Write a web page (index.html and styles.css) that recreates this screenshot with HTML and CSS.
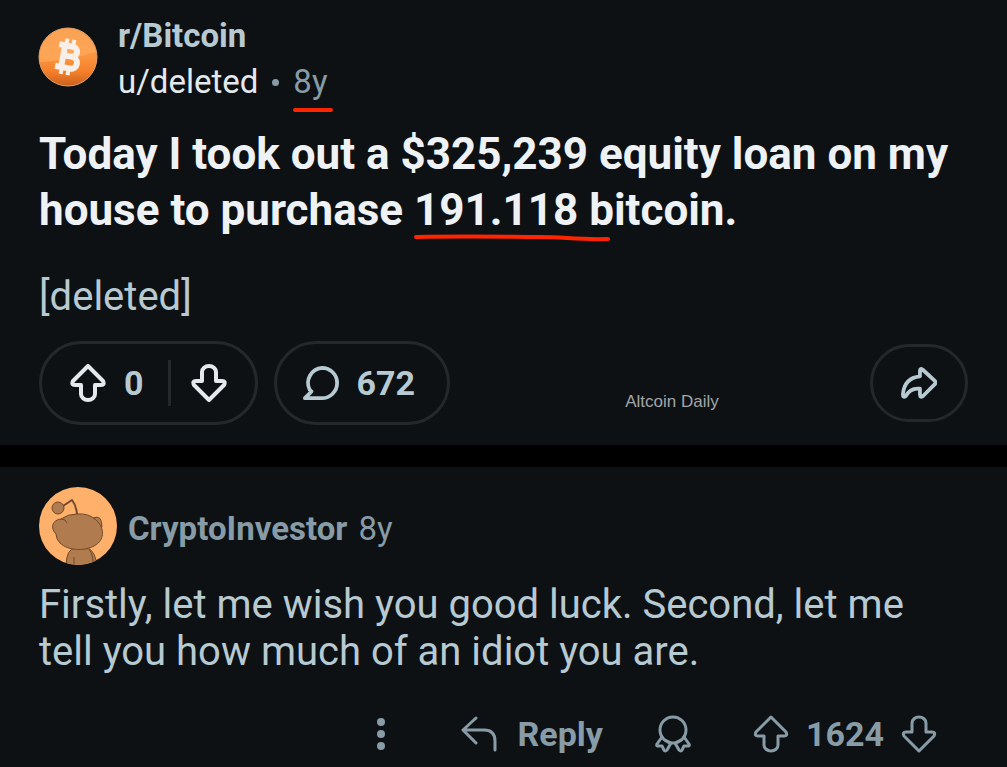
FILE: index.html
```
<!DOCTYPE html>
<html lang="en">
<head>
<meta charset="UTF-8">
<title>r/Bitcoin</title>
<link rel="stylesheet" href="styles.css">
</head>
<body>
<svg class="defs" aria-hidden="true">
  <symbol id="arrow" viewBox="0 0 36 38">
    <path d="M18 2 33 17Q35 21 31 21H25V30A7 6 0 0 1 11 30V21H5Q1 21 3 17Z"/>
  </symbol>
</svg>

<main>
<article class="post">
<header class="post-head">
  <svg class="coin" viewBox="0 0 60 60" role="img" aria-label="Bitcoin">
    <defs>
      <linearGradient id="coin-fill" x1="0" y1="0" x2="0" y2="1">
        <stop offset="0" stop-color="#f58f3c"/>
        <stop offset=".5" stop-color="#fc9440"/>
        <stop offset=".75" stop-color="#f5802a"/>
        <stop offset="1" stop-color="#c9601c"/>
      </linearGradient>
    </defs>
    <circle cx="30" cy="30" r="29" fill="url(#coin-fill)" stroke="#e3a06a" stroke-width="1"/>
    <path d="M2 35Q31 34 58 25A28 28 0 0 0 2 35Z" fill="#ffb56c" opacity=".5"/>
    <g transform="rotate(11 30 30)" fill="none" stroke="#f8f0e8" stroke-width="5" stroke-linejoin="round">
      <path d="M19 19H33A5 5 0 0 1 33 29H25M33 29H34A6 6 0 0 1 34 41H19M25 19V41" stroke-width="6"/>
      <path d="M26 12V19M33 12V19M26 41V48M33 41V48" stroke-width="4"/>
    </g>
  </svg>
  <div class="post-by">
    <a class="sub" href="#">r/Bitcoin</a>
    <div class="byline">
      <a class="user" href="#">u/deleted</a><span class="dot"></span><span class="age marked">8y<svg class="mark mark-age" viewBox="0 0 40 6"><path d="M2 3H38"/></svg></span>
    </div>
  </div>
</header>
<h1 class="title">Today I took out a $325,239 equity loan on my house to purchase <span class="marked">191.118<svg class="mark mark-amount" viewBox="0 0 196 8"><path d="M2 3C60 2 100 3 125 3S165 6 194 5"/></svg></span> bitcoin.</h1>
<p class="text">[deleted]</p>
<div class="bar">
  <div class="pill votes">
    <button class="up" aria-label="Upvote"><svg class="icon"><use href="#arrow"/></svg><span>0</span></button>
    <button class="down" aria-label="Downvote"><svg class="icon flip"><use href="#arrow"/></svg></button>
  </div>
  <button class="pill comments">
    <svg class="icon" viewBox="0 0 38 38"><path d="M20 3A16 16 0 1 1 20 35H2L9 28 7 26A16 16 0 0 1 20 3Z"/></svg>672
  </button>
  <span class="credit">Altcoin Daily</span>
  <button class="pill share" aria-label="Share">
    <svg class="icon" viewBox="0 0 38 34"><path d="M20 4Q20 1 23 3L36 15Q37 17 36 18L23 31Q20 33 20 29V23C12 22 8 25 5 31Q2 33 2 29C3 18 9 11 20 10Z"/></svg>
  </button>
</div>
</article>

<article class="comment">
<header class="comment-head">
  <svg class="avatar" viewBox="0 0 78 78" role="img" aria-label="CryptoInvestor">
    <defs><clipPath id="round"><circle cx="39" cy="39" r="39"/></clipPath></defs>
    <g clip-path="url(#round)">
      <rect width="78" height="78" fill="#ffb06a"/>
      <g fill="#b07c4f" stroke="#71492c" stroke-width="1">
        <path d="M27 80Q27 61 37 61H49Q57 65 58 80Z"/>
        <path d="M35 80V70M50 62Q55 69 54 80" fill="none"/>
        <path d="M54 31Q63 27 63 40L60 43Z"/>
        <path d="M22 32Q29 27 38 27Q50 26 57 33C66 41 65 52 58 57C48 65 29 64 21 56Q17 52 17 47C11 41 13 33 22 32Z"/>
        <path d="M22 32Q27 32 28 36" fill="none"/>
        <path d="M38 27Q37 18 33 13L24 19" fill="none" stroke-width="2"/>
        <circle cx="19" cy="21" r="6"/>
      </g>
    </g>
  </svg>
  <a class="author" href="#">CryptoInvestor</a>
  <span class="age">8y</span>
</header>
<p class="text">Firstly, let me wish you good luck. Second, let me tell you how much of an idiot you are.</p>
<div class="actions">
  <button class="more" aria-label="More"><svg class="dots" viewBox="0 0 8 32"><circle cx="4" cy="4" r="4"/><circle cx="4" cy="16" r="4"/><circle cx="4" cy="28" r="4"/></svg></button>
  <button class="reply"><svg class="icon" viewBox="0 0 36 38"><path d="M15 3 2 15 15 28M2 15H23Q34 15 34 26V35"/></svg>Reply</button>
  <button class="award" aria-label="Award"><svg class="icon" viewBox="0 0 36 38"><circle cx="18" cy="15" r="13"/><path d="M7 22 2 29Q1 31 3 31L7 31 9 35Q10 37 12 35L16 28 10 25M29 22 34 29Q35 31 33 31L29 31 27 35Q26 37 24 35L20 28 26 25"/></svg></button>
  <div class="score">
    <button aria-label="Upvote"><svg class="icon"><use href="#arrow"/></svg></button>
    <span>1624</span>
    <button aria-label="Downvote"><svg class="icon flip"><use href="#arrow"/></svg></button>
  </div>
</div>
</article>
</main>
</body>
</html>
```
FILE: styles.css
```
*{box-sizing:border-box}
body{margin:0;background:#0d1114;color:#b7c9d1;font-family:Roboto,"Liberation Sans",sans-serif}
a{color:inherit;text-decoration:none}
h1,p{margin:0}
button{display:flex;align-items:center;padding:0;border:0;background:none;color:inherit;font:inherit;cursor:pointer}
svg{display:block;flex:none}
.defs{position:absolute;width:0;height:0}
.icon{width:36px;height:38px;fill:none;stroke:currentColor;stroke-width:4px;stroke-linejoin:round;stroke-linecap:round}
.flip{transform:rotate(180deg)}

.post{padding:13px 39px 20px;border-bottom:22px solid #000}
.post-head{display:flex;align-items:center;gap:20px}
.coin{width:60px;height:60px;margin:-4px 0 0 -1px}
.post-by{font-size:33px;line-height:46px}
.sub{display:block;font-weight:bold}
.byline{display:flex;align-items:center}
.user{color:#e3e9ec}
.dot{width:7px;height:7px;margin:0 14px;border-radius:50%;background:#879ca6}
.age{color:#879ca6}
.marked{position:relative}
.mark{position:absolute;left:0;fill:none;stroke:#ff2500;stroke-width:4px;stroke-linecap:round}
.mark-age{bottom:-8px;width:40px;height:6px}
.mark-amount{bottom:-6px;width:196px;height:8px}
.title{margin-top:21px;color:#eef2f4;font-size:44px;line-height:56px;font-weight:bold}
.text{font-size:40px;line-height:47px}
.post .text{margin-top:35px}

.bar{display:flex;align-items:center;margin-top:21px}
.pill{display:flex;align-items:center;height:84px;border:3px solid #24282b;border-radius:42px;font-size:34px;font-weight:bold}
.votes{padding:0 28px;color:#e3e9ec}
.up{gap:18px;padding-right:24px;height:46px;border-right:3px solid #24282b}
.up span{color:#b7c9d1}
.down{padding-left:20px}
.comments{gap:18px;margin-left:16px;padding:0 32px 0 26px}
.credit{margin:38px auto 0;padding-left:24px;color:#a3a6a8;font-family:"Liberation Sans",sans-serif;font-size:17px;line-height:20px}
.share{justify-content:center;width:98px;height:78px}

.comment{padding:20px 39px 12px}
.comment-head{display:flex;align-items:center;gap:11px;font-size:33px;line-height:38px}
.comment-head a,.comment-head .age{padding-top:5px}
.avatar{width:78px;height:78px}
.author{color:#879ca6;font-weight:bold}
.comment .text{margin-top:16px;padding-right:24px}
.actions{display:flex;align-items:center;justify-content:flex-end;margin-top:38px;padding-right:31px;color:#879ca6;font-size:34px;line-height:42px;font-weight:bold}
.dots{width:8px;height:32px;fill:currentColor}
.more{margin-right:76px}
.reply{gap:21px;margin-right:52px}
.award{margin-right:62px}
.score{display:flex;align-items:center;gap:17px}
.actions .icon{stroke-width:3px}
```
